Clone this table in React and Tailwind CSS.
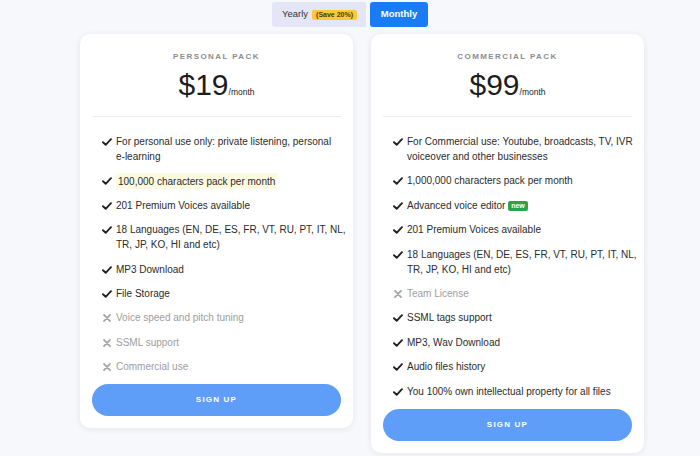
import React from "react";

const Check = () => (
  <svg width="10" height="8" viewBox="0 0 10 8" className="shrink-0 mt-[4px]">
    <path d="M1 4.2 L3.7 6.8 L9 1.2" fill="none" stroke="#222" strokeWidth="1.9" strokeLinecap="round" strokeLinejoin="round" />
  </svg>
);

const Cross = () => (
  <svg width="10" height="8" viewBox="0 0 10 8" className="shrink-0 mt-[4px]">
    <path d="M2 0.8 L8 7.2 M8 0.8 L2 7.2" fill="none" stroke="#a3a3a3" strokeWidth="1.7" strokeLinecap="round" />
  </svg>
);

const Item = ({ ok = true, children }) => (
  <li className="flex items-start gap-[4px]">
    {ok ? <Check /> : <Cross />}
    <span className={ok ? "text-[#2b2b2b]" : "text-[#9d9d9d]"}>{children}</span>
  </li>
);

const Card = ({ title, price, children }) => (
  <div className="w-[273px] bg-white rounded-[10px] shadow-[0_1px_6px_rgba(30,40,80,0.09)] px-3 pt-[18px] pb-[12px]">
    <div className="text-center text-[8px] leading-[10px] font-bold tracking-[1.4px] text-[#8c8c8c]">{title}</div>
    <div className="mt-[5px] h-[36px] leading-[36px] text-center text-[#1d1d1d]">
      <span className="text-[30px]">{price}</span>
      <span className="text-[8.5px]">/month</span>
    </div>
    <div className="mt-[13px] h-px bg-[#ececec]" />
    <ul className="mt-[17px] pl-[10px] -mr-[10px] flex flex-col gap-[9.4px] text-[10px] leading-[15px]">
      {children}
    </ul>
    <button className="mt-[10px] w-full h-[32px] rounded-full bg-[#5f9ef8] text-white text-[8px] font-bold tracking-[1.2px]">
      SIGN UP
    </button>
  </div>
);

export default function App() {
  return (
    <div className="w-[700px] h-[456px] overflow-hidden bg-[#f7f8fb] font-['Liberation_Sans',Arial,sans-serif]">
      <div className="pt-[2px] pl-[272px] flex items-center gap-[4px] h-[27px]">
        <div className="h-[25px] w-[94px] bg-[#e5e5f8] rounded-l-[3px] flex items-center pl-[10px] gap-[4px]">
          <span className="text-[9.5px] text-[#333]">Yearly</span>
          <span className="bg-[#fcc934] text-[#4b3a00] text-[7px] font-bold leading-[10px] px-[4px] rounded-[2px]">(Save 20%)</span>
        </div>
        <div className="h-[25px] w-[58px] bg-[#1a7cf5] rounded-[3px] flex items-center justify-center text-white text-[9.5px] font-bold">
          Monthly
        </div>
      </div>
      <div className="mt-[7px] pl-[80px] flex items-start gap-[18px]">
        <Card title="PERSONAL PACK" price="$19">
          <Item>
            For personal use only: private listening, personal <span className="whitespace-nowrap">e-learning</span>
          </Item>
          <Item>
            <span className="bg-[#fcfadf] px-[2px] py-[2.5px]">100,000 characters pack per month</span>
          </Item>
          <Item>201 Premium Voices available</Item>
          <Item>18 Languages (EN, DE, ES, FR, VT, RU, PT, IT, NL, TR, JP, KO, HI and etc)</Item>
          <Item>MP3 Download</Item>
          <Item>File Storage</Item>
          <Item ok={false}>Voice speed and pitch tuning</Item>
          <Item ok={false}>SSML support</Item>
          <Item ok={false}>Commercial use</Item>
        </Card>
        <Card title="COMMERCIAL PACK" price="$99">
          <Item>For Commercial use: Youtube, broadcasts, TV, IVR voiceover and other businesses</Item>
          <Item>1,000,000 characters pack per month</Item>
          <Item>
            Advanced voice editor{" "}
            <span className="inline-block align-[1px] bg-[#2aa34c] text-white text-[7px] font-bold leading-[10px] px-[3px] rounded-[2px]">new</span>
          </Item>
          <Item>201 Premium Voices available</Item>
          <Item>18 Languages (EN, DE, ES, FR, VT, RU, PT, IT, NL, TR, JP, KO, HI and etc)</Item>
          <Item ok={false}>Team License</Item>
          <Item>SSML tags support</Item>
          <Item>MP3, Wav Download</Item>
          <Item>Audio files history</Item>
          <Item>You 100% own intellectual property for all files</Item>
        </Card>
      </div>
    </div>
  );
}
